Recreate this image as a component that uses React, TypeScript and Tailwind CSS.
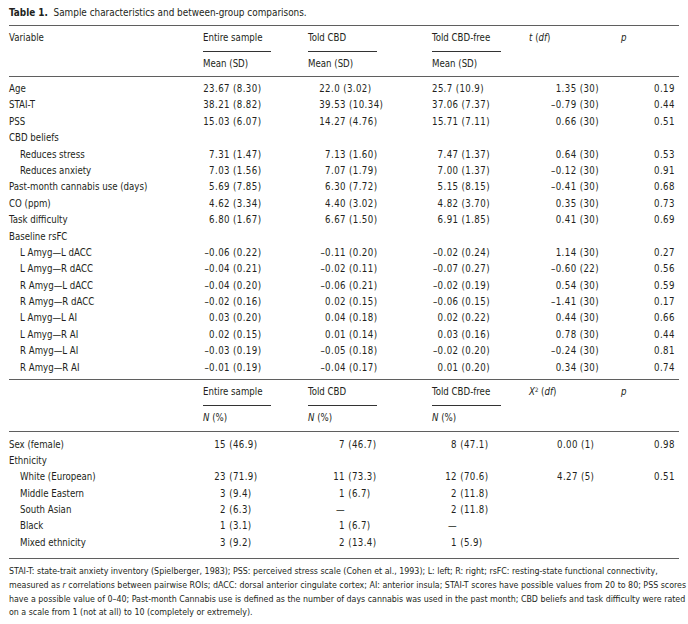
import React from "react";

type Five = [string, string, string, string, string];
type Row = { label: string; indent?: boolean; v?: Five };

const meanRows: Row[] = [
  { label: "Age", v: ["23.67 (8.30)", "22.0 (3.02)", "25.7 (10.9)", "1.35 (30)", "0.19"] },
  { label: "STAI-T", v: ["38.21 (8.82)", "39.53 (10.34)", "37.06 (7.37)", "–0.79 (30)", "0.44"] },
  { label: "PSS", v: ["15.03 (6.07)", "14.27 (4.76)", "15.71 (7.11)", "0.66 (30)", "0.51"] },
  { label: "CBD beliefs" },
  { label: "Reduces stress", indent: true, v: ["7.31 (1.47)", "7.13 (1.60)", "7.47 (1.37)", "0.64 (30)", "0.53"] },
  { label: "Reduces anxiety", indent: true, v: ["7.03 (1.56)", "7.07 (1.79)", "7.00 (1.37)", "–0.12 (30)", "0.91"] },
  { label: "Past-month cannabis use (days)", v: ["5.69 (7.85)", "6.30 (7.72)", "5.15 (8.15)", "–0.41 (30)", "0.68"] },
  { label: "CO (ppm)", v: ["4.62 (3.34)", "4.40 (3.02)", "4.82 (3.70)", "0.35 (30)", "0.73"] },
  { label: "Task difficulty", v: ["6.80 (1.67)", "6.67 (1.50)", "6.91 (1.85)", "0.41 (30)", "0.69"] },
  { label: "Baseline rsFC" },
  { label: "L Amyg—L dACC", indent: true, v: ["–0.06 (0.22)", "–0.11 (0.20)", "–0.02 (0.24)", "1.14 (30)", "0.27"] },
  { label: "L Amyg—R dACC", indent: true, v: ["–0.04 (0.21)", "–0.02 (0.11)", "–0.07 (0.27)", "–0.60 (22)", "0.56"] },
  { label: "R Amyg—L dACC", indent: true, v: ["–0.04 (0.20)", "–0.06 (0.21)", "–0.02 (0.19)", "0.54 (30)", "0.59"] },
  { label: "R Amyg—R dACC", indent: true, v: ["–0.02 (0.16)", "0.02 (0.15)", "–0.06 (0.15)", "–1.41 (30)", "0.17"] },
  { label: "L Amyg—L AI", indent: true, v: ["0.03 (0.20)", "0.04 (0.18)", "0.02 (0.22)", "0.44 (30)", "0.66"] },
  { label: "L Amyg—R AI", indent: true, v: ["0.02 (0.15)", "0.01 (0.14)", "0.03 (0.16)", "0.78 (30)", "0.44"] },
  { label: "R Amyg—L AI", indent: true, v: ["–0.03 (0.19)", "–0.05 (0.18)", "–0.02 (0.20)", "–0.24 (30)", "0.81"] },
  { label: "R Amyg—R AI", indent: true, v: ["–0.01 (0.19)", "–0.04 (0.17)", "0.01 (0.20)", "0.34 (30)", "0.74"] },
];

const nRows: Row[] = [
  { label: "Sex (female)", v: ["15 (46.9)", "7 (46.7)", "8 (47.1)", "0.00 (1)", "0.98"] },
  { label: "Ethnicity" },
  { label: "White (European)", indent: true, v: ["23 (71.9)", "11 (73.3)", "12 (70.6)", "4.27 (5)", "0.51"] },
  { label: "Middle Eastern", indent: true, v: ["3 (9.4)", "1 (6.7)", "2 (11.8)", "", ""] },
  { label: "South Asian", indent: true, v: ["2 (6.3)", "—", "2 (11.8)", "", ""] },
  { label: "Black", indent: true, v: ["1 (3.1)", "1 (6.7)", "—", "", ""] },
  { label: "Mixed ethnicity", indent: true, v: ["3 (9.2)", "2 (13.4)", "1 (5.9)", "", ""] },
];

const GRID = "grid grid-cols-[194px_105px_124px_97px_92px_58px]";

function Aligned({ text, sep, box }: { text: string; sep: string; box: string }) {
  if (!text) return <div />;
  const i = text.indexOf(sep);
  const left = i < 0 ? text : text.slice(0, i);
  const right = i < 0 ? "" : text.slice(i);
  return (
    <div className="whitespace-pre tracking-[0.4px]">
      <span className={"inline-block text-right " + box}>{left}</span>
      {right}
    </div>
  );
}

function MeanBody() {
  return (
    <div className="pt-[4px] pb-[2.5px]">
      {meanRows.map((r, k) => (
        <div key={k} className={GRID + " h-[16.4px] leading-[16.4px] items-center"}>
          <div className={r.indent ? "pl-[11px]" : ""}>{r.label}</div>
          {r.v ? (
            <>
              <Aligned text={r.v[0]} sep="." box="w-[12px]" />
              <Aligned text={r.v[1]} sep="." box="w-[23px]" />
              <Aligned text={r.v[2]} sep="." box="w-[11.5px]" />
              <div className="text-right pr-[22px] whitespace-pre tracking-[0.4px]">{r.v[3]}</div>
              <div className="pl-[33px] tracking-[0.4px]">{r.v[4]}</div>
            </>
          ) : null}
        </div>
      ))}
    </div>
  );
}

function NBody() {
  return (
    <div className="pt-[4.5px] pb-[6.5px]">
      {nRows.map((r, k) => (
        <div key={k} className={GRID + " h-[16.4px] leading-[16.4px] items-center"}>
          <div className={r.indent ? "pl-[11px]" : ""}>{r.label}</div>
          {r.v ? (
            <>
              <Aligned text={r.v[0]} sep=" " box="w-[23px]" />
              <Aligned text={r.v[1]} sep=" " box="w-[37px]" />
              <Aligned text={r.v[2]} sep=" " box="w-[25px]" />
              <div className="pl-[28px] whitespace-pre tracking-[0.4px]">{r.v[3]}</div>
              <div className="pl-[33px] tracking-[0.4px]">{r.v[4]}</div>
            </>
          ) : null}
        </div>
      ))}
    </div>
  );
}

function Underlines() {
  return (
    <div className={GRID + " h-px"}>
      <div />
      <div className="h-px w-[68px] bg-[#333333]" />
      <div className="h-px w-[69px] bg-[#333333]" />
      <div className="h-px w-[69px] bg-[#333333]" />
      <div />
      <div />
    </div>
  );
}

const Rule = () => <div className="h-[1.5px] bg-[#5f5f5f]" />;

export default function App() {
  return (
    <div className="w-[688px] h-[624px] bg-white px-[9px] text-[9.6px] text-[#231f20] font-['DejaVu_Sans',sans-serif] [font-stretch:condensed] overflow-hidden">
      <div className="h-[24.5px] pt-[6px] leading-[14px] text-[9.9px] whitespace-nowrap">
        <span className="font-bold">Table 1.</span>&nbsp; Sample characteristics and between-group comparisons.
      </div>
      <Rule />
      <div className={GRID + " h-[25px] items-center"}>
        <div>Variable</div>
        <div>Entire sample</div>
        <div>Told CBD</div>
        <div>Told CBD-free</div>
        <div>
          <i>t</i> (<i>df</i>)
        </div>
        <div>
          <i>p</i>
        </div>
      </div>
      <Underlines />
      <div className={GRID + " h-[23.5px] items-center"}>
        <div />
        <div>Mean (SD)</div>
        <div>Mean (SD)</div>
        <div>Mean (SD)</div>
        <div />
        <div />
      </div>
      <Rule />
      <MeanBody />
      <Rule />
      <div className={GRID + " h-[25px] items-center"}>
        <div />
        <div>Entire sample</div>
        <div>Told CBD</div>
        <div>Told CBD-free</div>
        <div>
          <i>X</i>
          <sup className="text-[6px]">2</sup> (<i>df</i>)
        </div>
        <div>
          <i>p</i>
        </div>
      </div>
      <Underlines />
      <div className={GRID + " h-[24.5px] items-center"}>
        <div />
        <div>
          <i>N</i> (%)
        </div>
        <div>
          <i>N</i> (%)
        </div>
        <div>
          <i>N</i> (%)
        </div>
        <div />
        <div />
      </div>
      <Rule />
      <NBody />
      <Rule />
      <div className="pt-[6px] text-[8.8px] leading-[13.7px] whitespace-nowrap">
        STAI-T: state-trait anxiety inventory (Spielberger, 1983); PSS: perceived stress scale (Cohen et al., 1993); L: left; R: right; rsFC: resting-state functional connectivity,
        <br />
        measured as <i>r</i> correlations between pairwise ROIs; dACC: dorsal anterior cingulate cortex; AI: anterior insula; STAI-T scores have possible values from 20 to 80; PSS scores
        <br />
        have a possible value of 0–40; Past-month Cannabis use is defined as the number of days cannabis was used in the past month; CBD beliefs and task difficulty were rated
        <br />
        on a scale from 1 (not at all) to 10 (completely or extremely).
      </div>
    </div>
  );
}
